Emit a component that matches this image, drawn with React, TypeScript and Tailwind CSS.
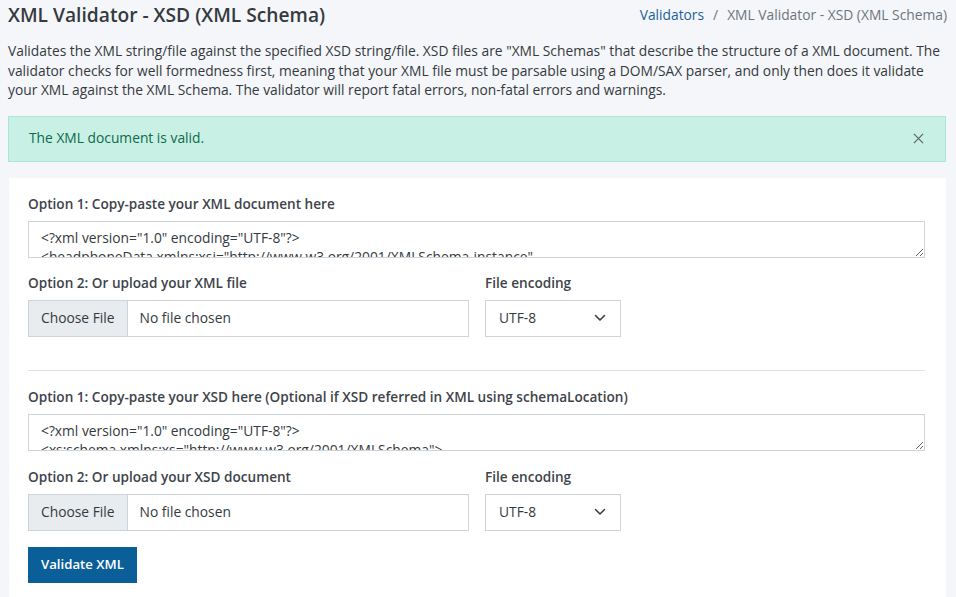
import React from "react";

const xmlSample = `<?xml version="1.0" encoding="UTF-8"?>
<headphoneData xmlns:xsi="http://www.w3.org/2001/XMLSchema-instance"
  xsi:noNamespaceSchemaLocation="headphones.xsd">`;

const xsdSample = `<?xml version="1.0" encoding="UTF-8"?>
<xs:schema xmlns:xs="http://www.w3.org/2001/XMLSchema">
  <xs:element name="headphoneData">`;

const Label = ({ children }: { children: React.ReactNode }) => (
  <label className="block text-[13.6px] font-semibold text-[#3d434a] leading-[19px] mb-[8px]">
    {children}
  </label>
);

const FileRow = ({ label }: { label: string }) => (
  <div className="flex gap-4">
    <div className="w-[441px]">
      <Label>{label}</Label>
      <div className="flex h-[37px] border border-[#ced4da] bg-white text-[13.8px] text-[#343a40]">
        <span className="flex items-center px-3 bg-[#e9ecef] border-r border-[#ced4da]">
          Choose File
        </span>
        <span className="flex items-center px-3">No file chosen</span>
      </div>
    </div>
    <div>
      <Label>File encoding</Label>
      <div className="flex items-center justify-between w-[136px] h-[37px] border border-[#ced4da] bg-white pl-[13px] pr-[14px] text-[13.8px] text-[#343a40]">
        <span>UTF-8</span>
        <svg width="12" height="8" viewBox="0 0 12 8" fill="none">
          <path d="M1.5 1.5 6 6l4.5-4.5" stroke="#343a40" strokeWidth="1.5" strokeLinecap="round" strokeLinejoin="round" />
        </svg>
      </div>
    </div>
  </div>
);

const SourceBox = ({ value }: { value: string }) => (
  <textarea
    readOnly
    defaultValue={value}
    spellCheck={false}
    className="block w-full h-[37px] resize-y overflow-hidden border border-[#ced4da] bg-white px-3 py-[6px] text-[13.8px] leading-[19.5px] text-[#343a40] outline-none"
  />
);

const App = () => {
  return (
    <div className="min-h-screen bg-[#f5f6f9] font-['Open_Sans',sans-serif] pl-2 pr-[10px] pt-[3px]">
      <div className="flex items-center justify-between h-[24px]">
        <h1 className="text-[19.2px] font-semibold text-[#343a40]">XML Validator - XSD (XML Schema)</h1>
        <div className="text-[13.8px] text-[#6c757d] -mr-px">
          <span className="text-[#1a6298]">Validators</span>
          <span className="px-[9px]">/</span>
          <span>XML Validator - XSD (XML Schema)</span>
        </div>
      </div>

      <p className="mt-[14px] text-[13.8px] leading-[19.5px] text-[#343a40]">
        Validates the XML string/file against the specified XSD string/file. XSD files are "XML Schemas" that describe the structure of a XML document. The validator checks for well formedness first, meaning that your XML file must be parsable using a DOM/SAX parser, and only then does it validate your XML against the XML Schema. The validator will report fatal errors, non-fatal errors and warnings.
      </p>

      <div className="mt-[16px] flex items-center justify-between h-[46px] border border-[#a9e7d3] bg-[#c9f0e4] pl-5 pr-[21px] text-[13.8px] text-[#0d6b4b]">
        <span>The XML document is valid.</span>
        <svg width="11" height="11" viewBox="0 0 12 12">
          <path d="M1 1l10 10M11 1 1 11" stroke="#5c6b66" strokeWidth="1.4" />
        </svg>
      </div>

      <div className="mt-4 ml-px bg-white pl-[19px] pr-[21px] pt-[16px] pb-6">
        <Label>Option 1: Copy-paste your XML document here</Label>
        <SourceBox value={xmlSample} />
        <div className="mt-[15px]">
          <FileRow label="Option 2: Or upload your XML file" />
        </div>

        <hr className="mt-[33px] mb-[16px] border-t border-[#dee2e6]" />

        <Label>Option 1: Copy-paste your XSD here (Optional if XSD referred in XML using schemaLocation)</Label>
        <SourceBox value={xsdSample} />
        <div className="mt-[16px]">
          <FileRow label="Option 2: Or upload your XSD document" />
        </div>

        <button
          type="button"
          className="mt-[16px] h-[36px] px-[13px] bg-[#0b5f99] text-white text-[13.2px] font-semibold"
        >
          Validate XML
        </button>
      </div>
    </div>
  );
};

export default App;
